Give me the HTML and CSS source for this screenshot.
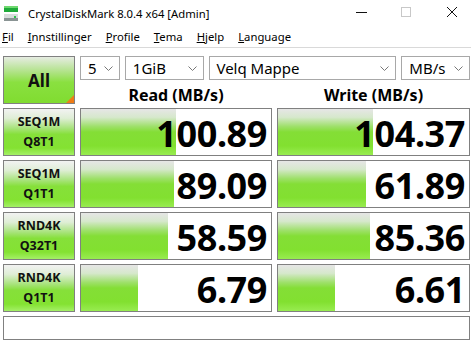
FILE: index.html
```html
<!DOCTYPE html>
<html lang="nb">
<head>
    <meta charset="UTF-8">
    <title>CrystalDiskMark 8.0.4 x64 [Admin]</title>
    <link rel="stylesheet" href="styles.css">
</head>
<body>

    <div class="titlebar">
        <svg class="app-icon" width="16" height="18" viewBox="0 0 16 18">
            <rect x="1" y="2" width="14" height="2" fill="#6fd96f"/>
            <rect x="1" y="4" width="14" height="4" fill="#1faa3a"/>
            <rect x="1" y="10" width="14" height="7" fill="#d8dcdc"/>
            <rect x="1" y="14" width="14" height="3" fill="#8a9494"/>
            <rect x="11" y="12" width="2" height="2" fill="#2cc44a"/>
        </svg>
        <span class="title">CrystalDiskMark 8.0.4 x64 [Admin]</span>
        <svg class="controls" width="130" height="26" viewBox="0 0 130 26">
            <path d="M15 12.5h11" stroke="#111" stroke-width="1"/>
            <rect x="60.5" y="7.5" width="9" height="9" fill="none" stroke="#c8c8c8"/>
            <path d="M106 7l10 10M116 7l-10 10" stroke="#111" stroke-width="1"/>
        </svg>
    </div>

    <div class="menubar">
        <span><u>F</u>il</span>
        <span><u>I</u>nnstillinger</span>
        <span><u>P</u>rofile</span>
        <span><u>T</u>ema</span>
        <span><u>H</u>jelp</span>
        <span><u>L</u>anguage</span>
    </div>

    <div class="main">
        <button class="all-btn">All</button>

        <div class="top-right">
            <div class="combos">
                <div class="combo c-count">5<svg width="9" height="5" viewBox="0 0 9 5"><path d="M0.5 0.5l4 4 4-4" fill="none" stroke="#777"/></svg></div>
                <div class="combo c-size">1GiB<svg width="9" height="5" viewBox="0 0 9 5"><path d="M0.5 0.5l4 4 4-4" fill="none" stroke="#777"/></svg></div>
                <div class="combo c-drive">Velq Mappe<svg width="9" height="5" viewBox="0 0 9 5"><path d="M0.5 0.5l4 4 4-4" fill="none" stroke="#777"/></svg></div>
                <div class="combo c-unit">MB/s<svg width="9" height="5" viewBox="0 0 9 5"><path d="M0.5 0.5l4 4 4-4" fill="none" stroke="#777"/></svg></div>
            </div>
            <div class="headings">
                <div class="heading">Read (MB/s)</div>
                <div class="heading">Write (MB/s)</div>
            </div>
        </div>

        <button class="test-btn">SEQ1M<br>Q8T1</button>
        <div class="result" style="--w:95px">100.89</div>
        <div class="result" style="--w:95px">104.37</div>

        <button class="test-btn">SEQ1M<br>Q1T1</button>
        <div class="result" style="--w:93px">89.09</div>
        <div class="result" style="--w:88px">61.89</div>

        <button class="test-btn">RND4K<br>Q32T1</button>
        <div class="result" style="--w:87px">58.59</div>
        <div class="result" style="--w:92px">85.36</div>

        <button class="test-btn">RND4K<br>Q1T1</button>
        <div class="result" style="--w:57px">6.79</div>
        <div class="result" style="--w:57px">6.61</div>

        <div class="status"></div>
    </div>

</body>
</html>
```

FILE: styles.css
```css
body {
    margin: 0;
    background-color: #fff;
    font-family: 'Noto Sans', 'Open Sans', sans-serif;
    color: #000;
}

/* window title */
.titlebar {
    height: 26px;
    display: flex;
    align-items: center;
}

.app-icon {
    margin: 0 9px 0 3px;
}

.title {
    font-size: 11.3px;
    flex: 1;
}

.controls {
    align-self: flex-start;
}

/* menu */
.menubar {
    display: flex;
    height: 21px;
    align-items: center;
    font-size: 11.3px;
    border-bottom: 1px solid #d9d9d9;
    padding-left: 2px;
}

.menubar span {
    margin-right: 14px;
}

.main {
    display: grid;
    grid-template-columns: 72px 192px 193px;
    grid-template-rows: 48px 48px 48px 48px 48px 24px;
    column-gap: 5px;
    row-gap: 4px;
    padding: 8px 0 0 3px;
}

button {
    font-family: inherit;
    margin: 0;
    padding: 0;
    color: #111;
    font-weight: bold;
    border: 1px solid #808080;
    background: linear-gradient(#f2f2f2 0%, #dfeed6 20%, #a7e37a 42%, #86e03a 55%, #84e232 85%, #a4f066 100%);
}

.all-btn {
    font-size: 17px;
    position: relative;
    background: linear-gradient(#e6ece2 0%, #b4e38e 30%, #8ae040 55%, #80dc30 100%);
}

/* little orange corner mark */
.all-btn::after {
    content: "";
    position: absolute;
    right: 0;
    bottom: 0;
    border-style: solid;
    border-width: 0 0 8px 8px;
    border-color: transparent transparent #f07c16 transparent;
}

.test-btn {
    font-size: 12.5px;
    line-height: 20px;
}

.top-right {
    grid-column: 2 / 4;
    display: flex;
    flex-direction: column;
}

.combos {
    display: flex;
    gap: 5px;
    height: 24px;
}

.combo {
    box-sizing: border-box;
    height: 24px;
    border: 1px solid #a8a8a8;
    font-size: 15px;
    line-height: 21px;
    padding: 0 6px 0 7px;
    display: flex;
    justify-content: space-between;
    align-items: center;
}

.c-count { width: 40px; }
.c-size { width: 80px; }
.c-drive { width: 188px; padding-left: 6px; }
.c-unit { width: 69px; }

.headings {
    display: grid;
    grid-template-columns: 192px 193px;
    column-gap: 5px;
    flex: 1;
}

.heading {
    font-size: 16px;
    font-weight: bold;
    text-align: center;
    line-height: 30px;
}

.result {
    border: 1px solid #808080;
    display: flex;
    align-items: center;
    justify-content: flex-end;
    font-size: 36px;
    font-weight: bold;
    line-height: 40px;
    padding: 3px 4px 0 0;
    letter-spacing: -0.4px;
    background: linear-gradient(#e6e6e6 0%, #d6e8cc 18%, #9ee06a 38%, #84de36 50%, #82e030 80%, #98ec50 100%) no-repeat;
    background-size: var(--w) 100%;
    background-color: #fff;
}

.status {
    grid-column: 1 / 4;
    border: 1px solid #808080;
}
```
